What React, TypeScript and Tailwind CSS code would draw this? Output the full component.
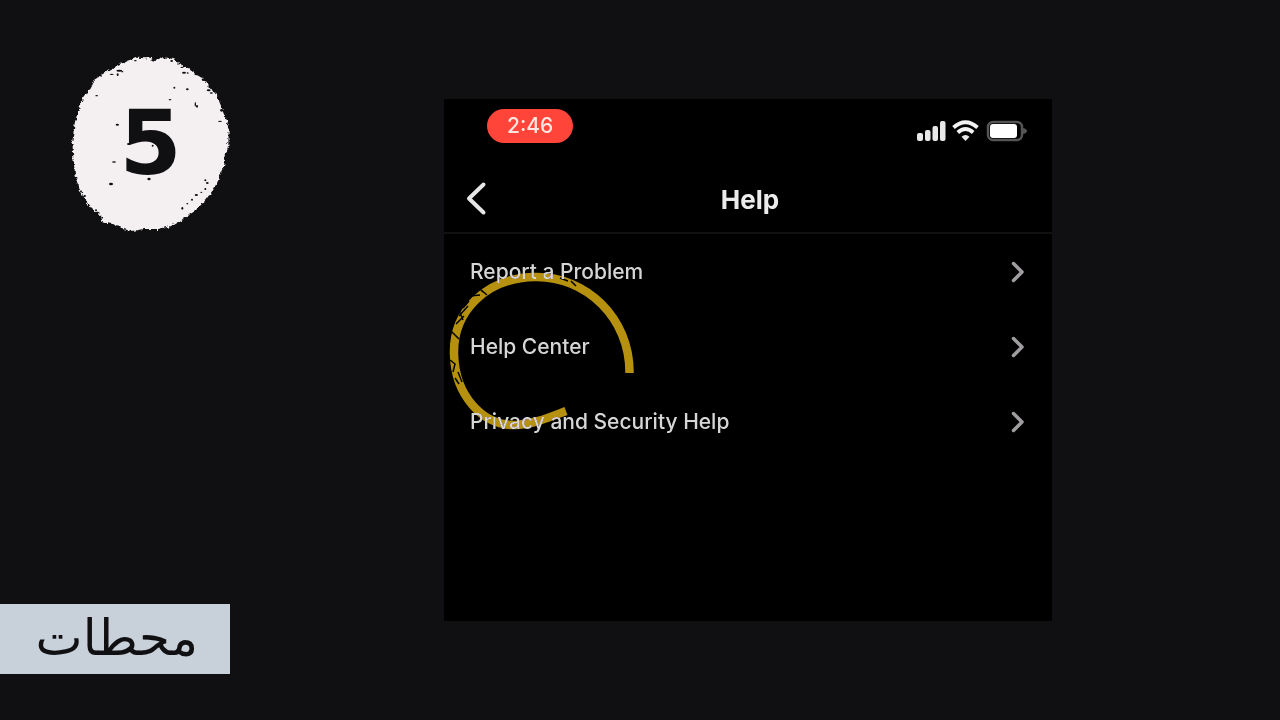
const helpItems = ["Report a Problem", "Help Center", "Privacy and Security Help"];

// Small worn spots on the badge: x, y, rx, ry
const specks = [
  [226, 47, 4, 2], [335, 48, 4, 3], [366, 67, 5, 2], [372, 83, 6, 3], [383, 84, 3, 2],
  [178, 77, 9, 3], [155, 88, 6, 2], [173, 89, 3, 4], [187, 80, 3, 2], [110, 152, 4, 2],
  [343, 128, 3, 3], [382, 133, 4, 3], [330, 164, 4, 2], [406, 178, 2, 7], [411, 184, 3, 4],
  [446, 136, 6, 3], [454, 144, 5, 2], [459, 134, 3, 3], [450, 127, 5, 2], [411, 88, 8, 3],
  [432, 104, 7, 4], [485, 196, 5, 4], [480, 229, 6, 2], [172, 239, 5, 3], [206, 297, 5, 3],
  [278, 302, 3, 3], [162, 351, 6, 2], [153, 417, 6, 4], [267, 402, 5, 4], [436, 406, 3, 3],
  [442, 414, 4, 3], [436, 432, 3, 3], [424, 442, 3, 2], [409, 450, 5, 3], [396, 464, 3, 3],
  [382, 476, 3, 2], [367, 490, 3, 4], [74, 453, 4, 3], [53, 420, 4, 3], [108, 496, 3, 3],
];

function StepBadge() {
  return (
    <svg viewBox="0 0 510 600" className="h-[200px] w-[170px]" role="img" aria-label="Step 5">
      <defs>
        <filter id="rough" x="-5%" y="-5%" width="110%" height="110%">
          <feTurbulence type="fractalNoise" baseFrequency="0.09" numOctaves="3" seed="4" />
          <feDisplacementMap in="SourceGraphic" scale="16" xChannelSelector="R" yChannelSelector="G" />
        </filter>
      </defs>
      <path
        filter="url(#rough)"
        fill="#f4f0f2"
        d="M230 38 262 40 288 48 300 37 325 38 345 45 358 58 385 70 405 86 432 103 446 122 465 145 478 170 490 200 500 225 506 255 505 300 497 330 492 365 478 395 463 430 435 467 405 498 365 524 335 542 295 552 250 552 218 558 190 552 180 543 155 536 130 533 120 510 95 488 75 462 55 425 45 385 40 340 37 290 44 235 55 195 70 160 95 125 103 105 130 85 165 66 200 48Z"
      />
      {specks.map(([x, y, rx, ry]) => (
        <ellipse key={`${x}-${y}`} cx={x} cy={y} rx={rx} ry={ry} fill="#101012" />
      ))}
      <text
        x="272"
        y="386"
        textAnchor="middle"
        fill="#101012"
        className="font-['DejaVu_Sans',sans-serif] text-[268px] font-bold"
      >
        5
      </text>
    </svg>
  );
}

function StatusIcons() {
  return (
    <svg viewBox="0 0 112 24" className="h-6 w-28" aria-hidden="true">
      <g fill="#e8e8e8">
        <rect x="1" y="14" width="6" height="8" rx="2" />
        <rect x="9" y="11" width="5.500" height="11" rx="2" />
        <rect x="16.500" y="7" width="5.500" height="15" rx="2" />
        <rect x="24" y="2" width="5.500" height="20" rx="2" />
        <path d="M49.500 22 45.500 17.800Q49.500 14 53.500 17.800Z" />
      </g>
      <g fill="none" stroke="#f2f2f2" strokeWidth="3.800">
        <path d="M37.500 8.500Q49.500-2 61.500 8.500" />
        <path d="M41.800 13.500Q49.500 6.500 57.200 13.500" />
      </g>
      <rect x="72" y="3" width="34" height="18" rx="5" fill="none" stroke="#555" strokeWidth="2.500" />
      <rect x="74" y="5" width="27" height="14" rx="3" fill="#fff" />
      <path d="M107 9Q111 10 111 12T107 15Z" fill="#555" />
    </svg>
  );
}

function HighlightRing() {
  return (
    <svg
      viewBox="444 260 200 180"
      className="pointer-events-none absolute top-[26px] left-0 h-[180px] w-[200px] mix-blend-lighten"
      aria-hidden="true"
    >
      <path
        d="M629.500 373C630 318 586 276 535 277C485 278 453 312 454 354C455 395 482 426 516 425C534 424 550 417 566 411"
        fill="none"
        stroke="#b5910f"
        strokeWidth="8.500"
      />
      <path
        d="M474 291l6-2 7 6M470 296l10-1M478 287l5 5M463 308l6-7M459 316l9-10M456 324l8-8M458 308l5 12M452 332l7 7M450 360l5 4-2 8M458 372l4 10M455 378l4 6M560 278l8 3M571 281l5 5"
        fill="none"
        stroke="#000"
        strokeWidth="1.500"
      />
    </svg>
  );
}

function HelpScreen() {
  return (
    <section className="flex w-full flex-col bg-black font-['Inter',sans-serif]">
      <div className="flex h-16 items-start justify-between pt-[10px] pr-6 pl-[43px]">
        <span className="rounded-full bg-[#ff453a] px-5 text-[21px] leading-[34px] font-medium text-[#ffe6e0]">
          2:46
        </span>
        <div className="pt-[10px]">
          <StatusIcons />
        </div>
      </div>

      <header className="flex h-[71px] items-center border-b-2 border-[#121011] pr-4 pl-5">
        <button type="button" aria-label="Back" className="w-10">
          <svg viewBox="0 0 24 36" className="h-9 w-6" fill="none" stroke="#e6e6e6" strokeWidth="4">
            <path d="M19.500 4.500 5 18.500 19.500 32.500" strokeLinecap="round" strokeLinejoin="round" />
          </svg>
        </button>
        <h1 className="flex-1 pt-1 text-center text-[26px] leading-8 font-bold text-[#ececec]">Help</h1>
        <span className="w-10" />
      </header>

      <nav aria-label="Help" className="relative">
        <ul>
          {helpItems.map((item) => (
            <li key={item}>
              <button
                type="button"
                className="flex h-[75px] w-full items-center justify-between px-[26px] text-[21px] leading-7 font-medium text-[#d6d6d6]"
              >
                {item}
                <svg viewBox="0 0 16 24" className="h-6 w-4" fill="none" stroke="#a09da0" strokeWidth="3.500">
                  <path d="M3.500 3.500 12 12 3.500 20.500" strokeLinecap="round" strokeLinejoin="round" />
                </svg>
              </button>
            </li>
          ))}
        </ul>
        <HighlightRing />
      </nav>
    </section>
  );
}

export default function App() {
  return (
    <div className="flex min-h-screen bg-[#101012]">
      <aside className="flex w-[230px] shrink-0 flex-col justify-between pt-[45px] pb-[46px]">
        <div className="pl-[60px]">
          <StepBadge />
        </div>
        <p
          lang="ar"
          dir="rtl"
          className="h-[70px] bg-[#c8d0da] pr-8 font-['DejaVu_Sans',sans-serif] text-[50px] leading-[68px] text-[#101012]"
        >
          محطات
        </p>
      </aside>
      <main className="flex flex-1 py-[99px] pr-[228px] pl-[214px]">
        <HelpScreen />
      </main>
    </div>
  );
}
